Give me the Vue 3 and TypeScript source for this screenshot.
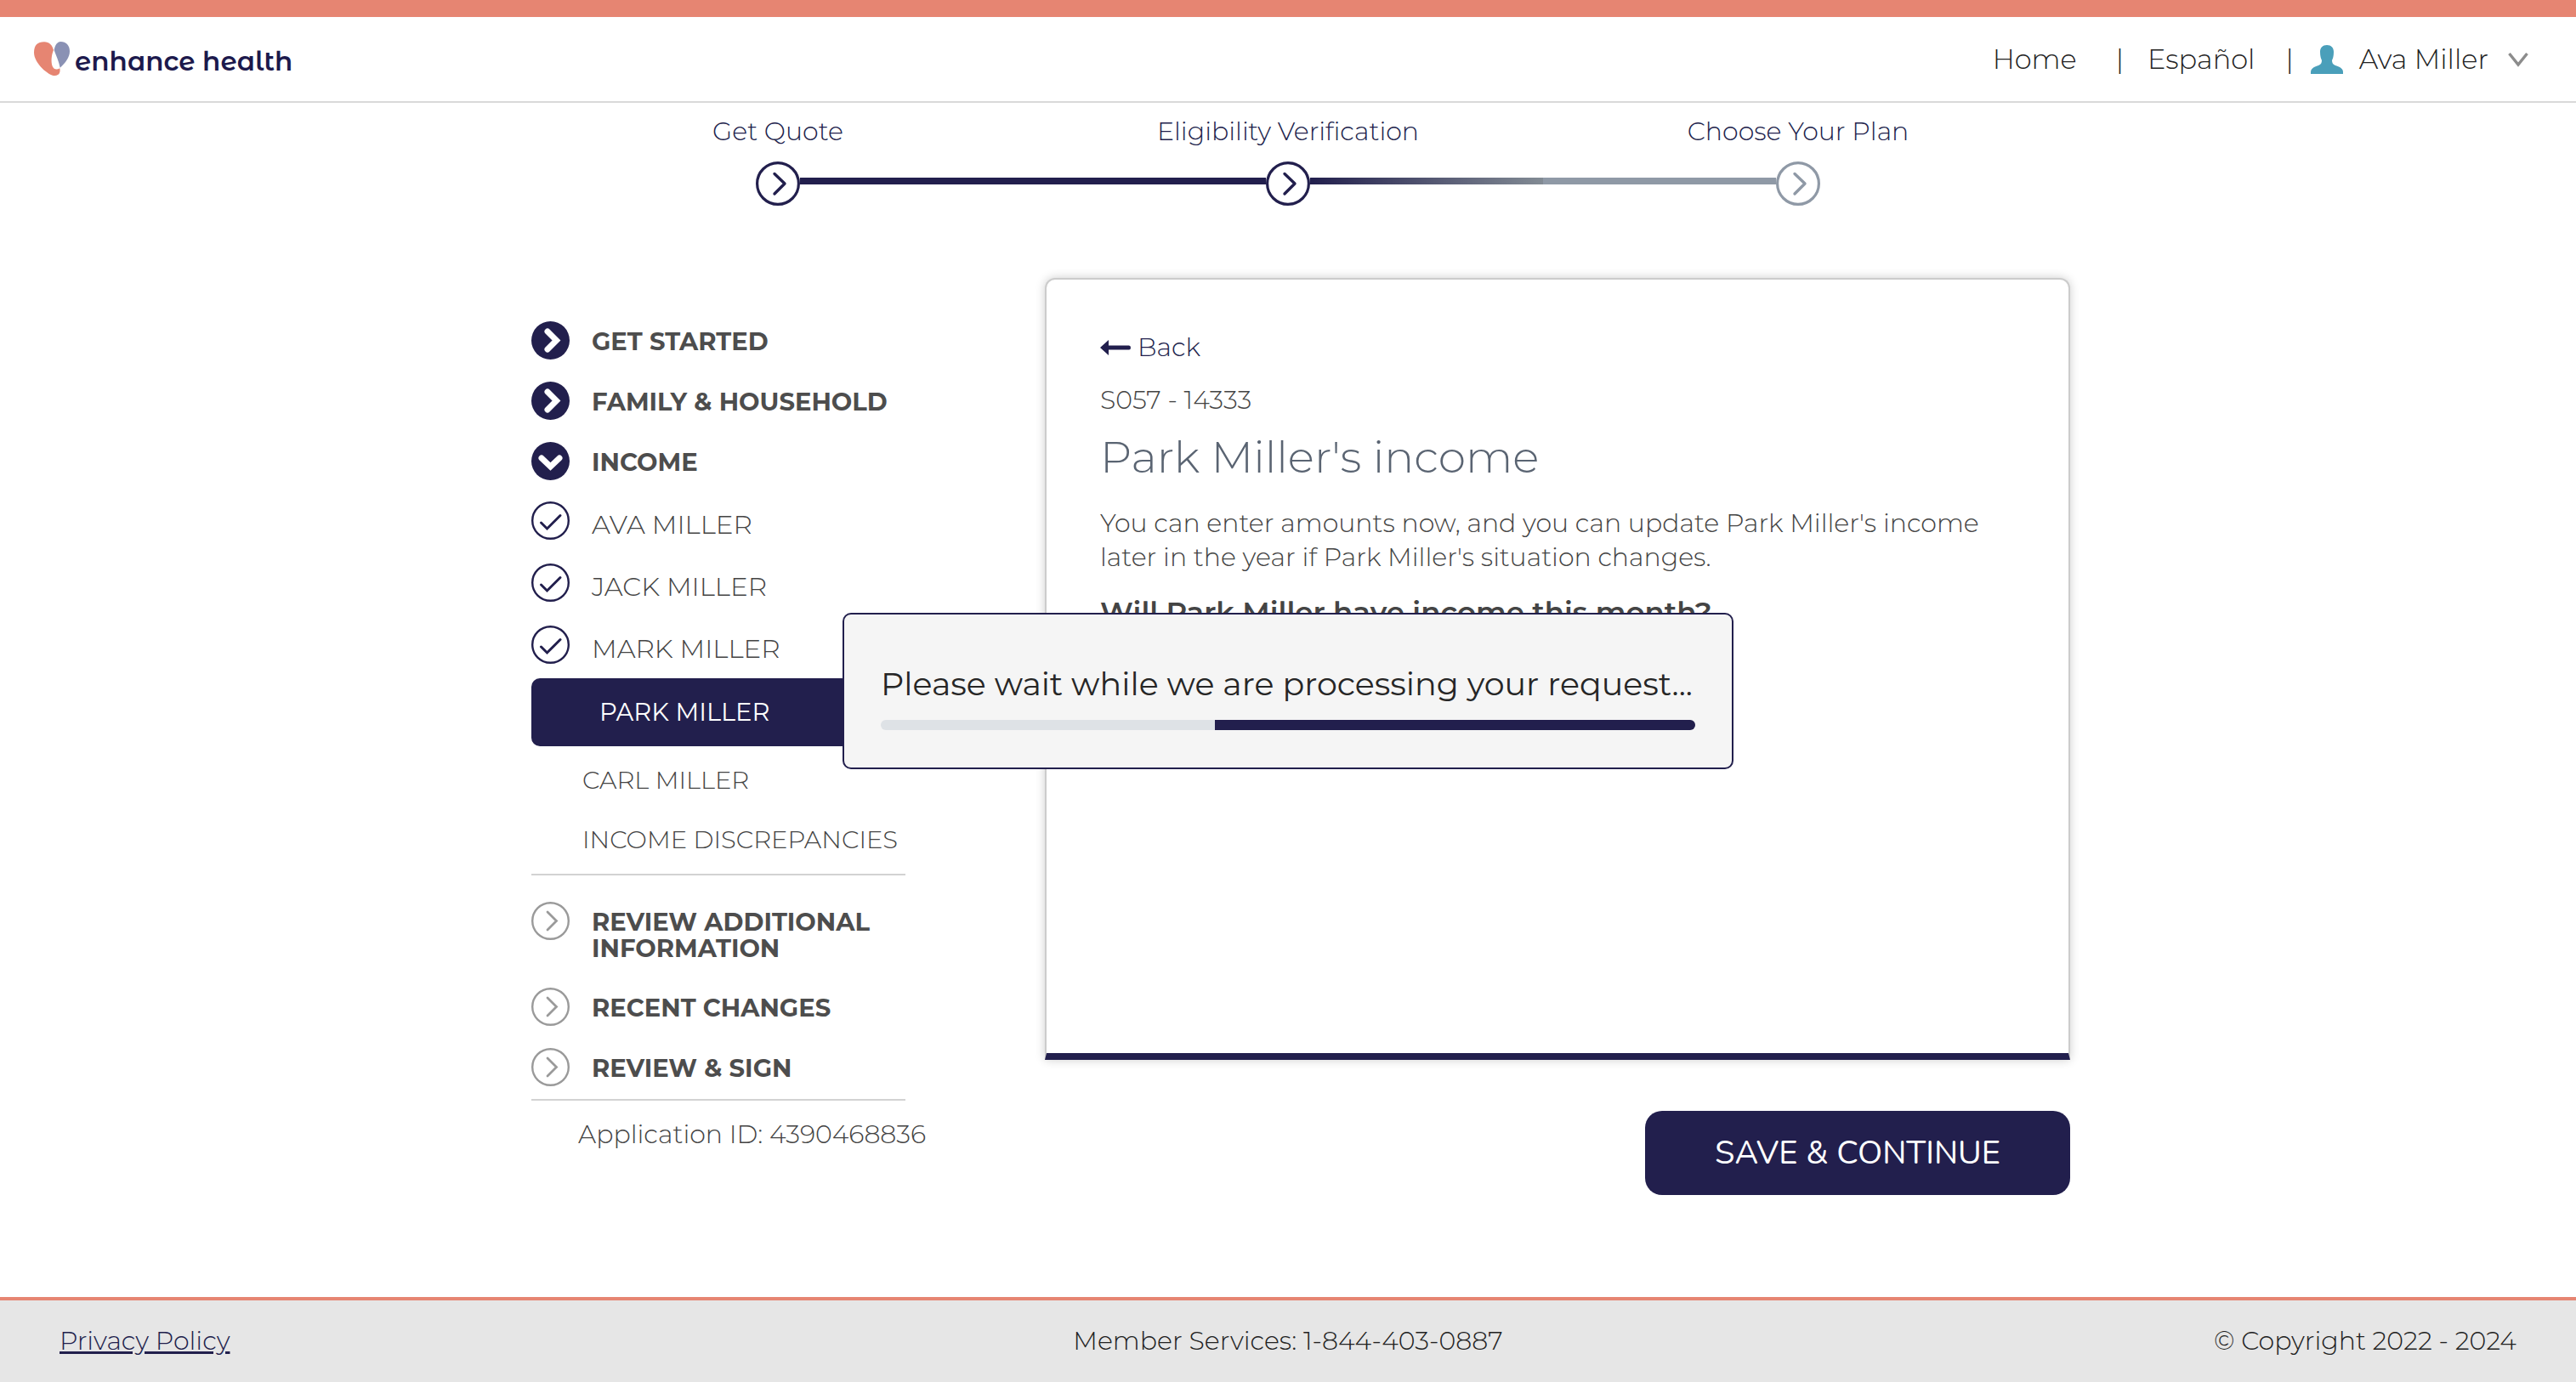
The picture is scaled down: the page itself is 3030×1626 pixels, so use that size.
<script setup lang="ts">
interface Step {
  label: string
  state: 'done' | 'current' | 'upcoming'
}

const steps: Step[] = [
  { label: 'Get Quote', state: 'done' },
  { label: 'Eligibility Verification', state: 'current' },
  { label: 'Choose Your Plan', state: 'upcoming' },
]

const openedSections = [
  { label: 'GET STARTED', expanded: false },
  { label: 'FAMILY & HOUSEHOLD', expanded: false },
  { label: 'INCOME', expanded: true },
]

const completedMembers: string[] = ['AVA MILLER', 'JACK MILLER', 'MARK MILLER']
const pendingPages: string[] = ['CARL MILLER', 'INCOME DISCREPANCIES']
const upcomingSections: string[] = ['REVIEW ADDITIONAL INFORMATION', 'RECENT CHANGES', 'REVIEW & SIGN']
</script>

<template>
  <div class="page">
    <header class="header">
      <a class="brand" href="#" aria-label="enhance health">
        <svg class="brand-mark" viewBox="120 147 126 120" aria-hidden="true">
          <path fill="#e68572" d="M120 185C120 160 132 148 156 148C174 148 185 160 189 177C182 192 179 216 185 234C190 245 200 248 211 241C213 252 212 267 193 267C172 267 120 224 120 185Z" />
          <path fill="#8a91b4" d="M214 147C233 147 246 160 246 181C246 203 231 222 212 239C208 218 198 196 191 177C194 160 202 147 214 147Z" />
        </svg>
        <span class="brand-name">enhance health</span>
      </a>
      <nav class="top-nav" aria-label="Account">
        <a class="home" href="#">Home</a>
        <span class="bar">|</span>
        <a class="language" href="#">Español</a>
        <span class="bar">|</span>
        <button class="account" type="button">
          <svg class="avatar" viewBox="0 0 38 34" aria-hidden="true">
            <path fill="#4a9fba" d="M19 0C24 0 27 3 27 8C27 13 26 16 25 18C25 21 26 23 29 24C35 26 38 28 38 32V34H0V32C0 28 3 26 9 24C12 23 13 21 13 18C12 16 11 13 11 8C11 3 14 0 19 0Z" />
          </svg>
          <span>Ava Miller</span>
          <svg class="caret" viewBox="0 0 24 18" aria-hidden="true">
            <path fill="none" stroke="#8c8c8c" stroke-width="3.400" d="M1.500 2L12 15L22.500 2" />
          </svg>
        </button>
      </nav>
    </header>

    <ol class="stepper">
      <li v-for="step in steps" :key="step.label" class="step" :class="step.state">
        <span class="step-label">{{ step.label }}</span>
        <span class="step-track">
          <svg class="step-icon" viewBox="0 0 52 52" aria-hidden="true">
            <circle cx="26" cy="26" r="24.4" fill="#fff" stroke="currentColor" stroke-width="3.2" />
            <path fill="none" stroke="currentColor" stroke-width="3.4" stroke-linecap="round" stroke-linejoin="round" d="M22 14.500L34 26L22 38" />
          </svg>
        </span>
      </li>
    </ol>

    <main class="content">
      <nav class="sidebar" aria-label="Application">
        <ul class="sections">
          <li v-for="section in openedSections" :key="section.label">
            <a class="row section" href="#">
              <svg class="icon" viewBox="0 0 45 45" aria-hidden="true">
                <circle cx="22.500" cy="22.500" r="22.500" fill="#221f4d" />
                <path fill="none" stroke="#fff" stroke-width="7" stroke-linecap="round" :d="section.expanded ? 'M12 19L22.5 29L33 19' : 'M19 12L29.500 22.500L19 33'" />
              </svg>
              <span>{{ section.label }}</span>
            </a>
          </li>
        </ul>
        <ul class="members">
          <li v-for="member in completedMembers" :key="member">
            <a class="row member" href="#">
              <svg class="icon" viewBox="0 0 45 45" aria-hidden="true">
                <circle cx="22.500" cy="22.500" r="21.300" fill="#fff" stroke="#221f4d" stroke-width="2.400" />
                <path fill="none" stroke="#221f4d" stroke-width="3" stroke-linecap="round" d="M11.500 25L18.500 32L34 16.500" />
              </svg>
              <span>{{ member }}</span>
            </a>
          </li>
        </ul>
        <a class="active-page" href="#" aria-current="page">PARK MILLER</a>
        <ul class="pages">
          <li v-for="page in pendingPages" :key="page"><a class="page-link" href="#">{{ page }}</a></li>
        </ul>
        <ul class="sections upcoming-sections">
          <li v-for="section in upcomingSections" :key="section">
            <a class="row section" href="#">
              <svg class="icon" viewBox="0 0 45 45" aria-hidden="true">
                <circle cx="22.500" cy="22.500" r="21.300" fill="#fff" stroke="#9a9a9a" stroke-width="2.400" />
                <path fill="none" stroke="#9a9a9a" stroke-width="2.800" stroke-linecap="round" d="M19 12L29.500 22.500L19 33" />
              </svg>
              <span>{{ section }}</span>
            </a>
          </li>
        </ul>
        <p class="application-id">Application ID: 4390468836</p>
      </nav>

      <div class="panel">
        <section class="card">
          <a class="back" href="#">
            <svg class="back-arrow" viewBox="0 0 36 18" aria-hidden="true">
              <path fill="#221f4d" d="M0 9L10 0V6.500H34Q36 6.500 36 9Q36 11.500 34 11.500H10V18Z" />
            </svg>
            <span>Back</span>
          </a>
          <p class="screen-code">S057 - 14333</p>
          <h1>Park Miller's income</h1>
          <p class="intro">
            You can enter amounts now, and you can update Park Miller's income
            later in the year if Park Miller's situation changes.
          </p>
          <h2>Will Park Miller have income this month?</h2>
        </section>
        <button class="save" type="button">SAVE &amp; CONTINUE</button>
      </div>
    </main>

    <footer class="footer">
      <a href="#">Privacy Policy</a>
      <span>Member Services: 1-844-403-0887</span>
      <span class="copyright">© Copyright 2022 - 2024</span>
    </footer>

    <div class="overlay">
      <div class="dialog" role="alertdialog" aria-label="Processing">
        <p>Please wait while we are processing your request...</p>
        <div class="progress"><div class="progress-fill"></div></div>
      </div>
    </div>
  </div>
</template>

<style>
body {
  margin: 0;
  background: #fff;
}
</style>

<style scoped>
.page {
  display: flex;
  flex-direction: column;
  min-height: 100vh;
  font-family: Montserrat, Inter, sans-serif;
  font-size: 30px;
  font-weight: 300;
  line-height: 40px;
  color: #444;
}

.page * {
  box-sizing: border-box;
}

a {
  color: inherit;
  text-decoration: none;
}

ul,
ol {
  margin: 0;
  padding: 0;
  list-style: none;
}

p,
h1,
h2 {
  margin: 0;
}

button {
  border: 0;
  font: inherit;
  cursor: pointer;
}

svg {
  display: block;
  flex: none;
}

.header {
  display: flex;
  align-items: flex-start;
  justify-content: space-between;
  padding: 29px 56px 24px 40px;
  border-top: 20px solid #e68572;
  border-bottom: 2px solid #d9d9d9;
}

.brand {
  display: flex;
  align-items: flex-start;
  gap: 6px;
}

.brand-mark {
  width: 42px;
  height: 40px;
}

.brand-name {
  font-family: 'Montserrat Alternates', Montserrat, Inter, sans-serif;
  font-size: 31px;
  font-weight: 600;
  line-height: 46px;
  color: #1c194c;
}

.top-nav {
  display: flex;
  align-items: center;
  font-size: 32px;
  line-height: 42px;
  color: #222;
}

.home {
  margin-right: 46px;
}

.language {
  margin: 0 36px 0 28px;
}

.account {
  display: flex;
  align-items: center;
  gap: 19px;
  margin-left: 20px;
  padding: 0;
  background: none;
  color: inherit;
}

.avatar {
  width: 38px;
  height: 34px;
}

.caret {
  width: 24px;
  height: 18px;
  margin-left: 4px;
}

.stepper {
  display: flex;
  width: 1800px;
  max-width: 100%;
  margin: 14px auto 0;
}

.step {
  flex: 1;
  color: #221f4d;
  text-align: center;
}

.step-label {
  display: block;
}

.step-track {
  display: flex;
  align-items: center;
  margin-top: 15px;
}

.step-track::before,
.step-track::after {
  content: '';
  flex: 1;
  height: 8px;
  margin-bottom: 6px;
  background: #221f4d;
}

.step:first-child .step-track::before,
.step:last-child .step-track::after {
  background: none;
}

.current .step-track::after {
  background: linear-gradient(90deg, #221f4d, #828b94);
}

.upcoming .step-track::before {
  background: #8f99a6;
}

.step-icon {
  width: 52px;
  height: 52px;
}

.upcoming .step-icon {
  color: #8f99a6;
}

.content {
  display: flex;
  justify-content: space-between;
  width: 1840px;
  max-width: 100%;
  box-sizing: border-box;
  margin: 85px auto 119px;
  padding-left: 30px;
}

.sidebar {
  width: 460px;
  padding-top: 51px;
}

.row {
  display: flex;
  align-items: flex-start;
  gap: 26px;
}

.icon {
  width: 45px;
  height: 45px;
}

.sections {
  display: flex;
  flex-direction: column;
  gap: 26px;
}

.section {
  font-size: 29px;
  font-weight: 700;
  line-height: 31px;
  color: #4d4d4d;
}

.section span {
  padding-top: 8px;
}

.members {
  display: flex;
  flex-direction: column;
  gap: 28px;
  margin: 25px 0 17px;
  font-size: 31px;
}

.member {
  line-height: 35px;
}

.member span {
  padding-top: 10px;
}

.active-page {
  display: block;
  width: 440px;
  padding: 20px 80px;
  border-radius: 10px;
  background: #221f4d;
  color: #fff;
  font-size: 29px;
  font-weight: 400;
}

.pages {
  width: 440px;
  padding: 5px 0;
  border-bottom: 2px solid #d2d2d2;
}

.page-link {
  display: block;
  padding: 15px 0 15px 60px;
  font-size: 29px;
  white-space: nowrap;
}

.upcoming-sections {
  width: 440px;
  padding: 31px 0 15px;
  border-bottom: 2px solid #d2d2d2;
}

.upcoming-sections li:first-child {
  padding-bottom: 5px;
}

.application-id {
  padding: 20px 0 0 55px;
  white-space: nowrap;
}

.panel {
  display: flex;
  flex-direction: column;
  align-items: flex-end;
  width: 1206px;
}

.card {
  width: 100%;
  min-height: 920px;
  padding: 60px 63px;
  border: 2px solid #ccc;
  border-bottom: 8px solid #221f4d;
  border-radius: 12px 12px 0 0;
  background: #fff;
  box-shadow: 0 0 12px rgba(0, 0, 0, 0.2);
}

.back {
  display: flex;
  align-items: center;
  gap: 8px;
  color: #221f4d;
}

.back-arrow {
  width: 36px;
  height: 18px;
}

.screen-code {
  margin-top: 22px;
}

h1 {
  margin-top: 17px;
  font-size: 52px;
  font-weight: 300;
  line-height: 60px;
  color: #5a6472;
}

.intro {
  margin-top: 28px;
}

h2 {
  margin-top: 24px;
  font-size: 34px;
  font-weight: 600;
  line-height: 40px;
}

.save {
  width: 500px;
  height: 99px;
  margin-top: 60px;
  border-radius: 20px;
  background: #221f4d;
  color: #fff;
  font-family: Nunito, Lato, sans-serif;
  font-size: 38px;
  font-weight: 400;
}

.footer {
  display: grid;
  grid-template-columns: 1fr auto 1fr;
  align-items: center;
  height: 100px;
  margin-top: auto;
  padding: 0 70px;
  border-top: 4px solid #e68572;
  background: #e6e6e6;
  color: #222;
}

.footer a {
  justify-self: start;
  color: #221f4d;
  text-decoration: underline;
}

.copyright {
  justify-self: end;
}

.overlay {
  position: fixed;
  inset: 0;
  display: flex;
  align-items: center;
  justify-content: center;
}

.dialog {
  width: 1048px;
  padding: 56px 43px 44px;
  border: 2px solid #221f4d;
  border-radius: 10px;
  background: #f5f5f5;
  color: #262626;
  font-size: 38px;
  font-weight: 400;
  line-height: 52px;
}

.dialog p {
  white-space: nowrap;
}

.progress {
  display: flex;
  justify-content: flex-end;
  height: 12px;
  margin-top: 16px;
  border-radius: 6px;
  background: #dee2e6;
  overflow: hidden;
}

.progress-fill {
  width: 59%;
  background: #221f4d;
}
</style>
